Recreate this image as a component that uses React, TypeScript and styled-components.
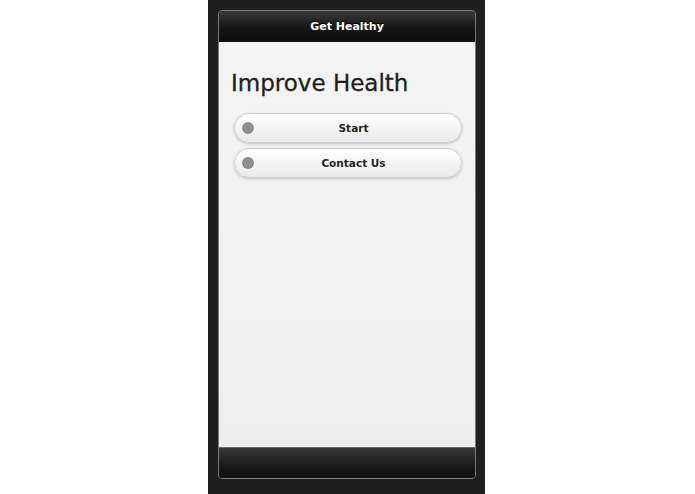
import styled, { createGlobalStyle } from "styled-components";

const GlobalStyle = createGlobalStyle`
  html, body {
    margin: 0;
    padding: 0;
    background: #ffffff;
  }
  body {
    font-family: "DejaVu Sans", "Liberation Sans", sans-serif;
  }
`;

const Page = styled.div`
  display: flex;
  justify-content: center;
  width: 695px;
  height: 494px;
  overflow: hidden;
`;

const PhoneFrame = styled.div`
  box-sizing: border-box;
  width: 277px;
  height: 494px;
  margin-right: 2px;
  padding: 10px 9px 15px 10px;
  background: #1f1f1f;
`;

const Screen = styled.div`
  box-sizing: border-box;
  display: flex;
  flex-direction: column;
  width: 258px;
  height: 469px;
  border: 1px solid #7a7a7a;
  border-radius: 4px;
  overflow: hidden;
`;

const Bar = styled.div<{ $footer?: boolean }>`
  box-sizing: border-box;
  flex-shrink: 0;
  display: flex;
  align-items: center;
  justify-content: center;
  height: 31px;
  background: ${(p) =>
    p.$footer
      ? "linear-gradient(#383838, #1a1a1a 60%, #111111)"
      : "linear-gradient(#3a3a3a, #161616 55%, #0e0e0e)"};
  border-top: ${(p) => (p.$footer ? "1px solid #6a6a6a" : "none")};
  color: #ffffff;
  font-size: 11px;
  font-weight: bold;
  text-shadow: 0 -1px 1px #000000;
`;

const Content = styled.div`
  flex: 1;
  display: flex;
  flex-direction: column;
  padding: 0 13px 0 15px;
  background: linear-gradient(#f4f4f4, #eeeeee);
`;

const Title = styled.h1`
  margin: 27px 0 16px -3px;
  font-size: 23px;
  line-height: 28px;
  font-weight: normal;
  color: #1e1e1e;
  -webkit-text-stroke: 0.3px #1e1e1e;
`;

const ButtonList = styled.div`
  display: flex;
  flex-direction: column;
  gap: 5px;
`;

const ListButton = styled.button`
  box-sizing: border-box;
  display: flex;
  align-items: center;
  height: 30px;
  padding: 0 8px 0 7px;
  border: 1px solid #cdcdcd;
  border-radius: 15px;
  background: linear-gradient(#ffffff, #f4f4f4 50%, #e9e9e9);
  box-shadow: 0 1px 3px rgba(0, 0, 0, 0.22);
  font-family: "DejaVu Sans", "Liberation Sans", sans-serif;
  font-size: 10.5px;
  font-weight: bold;
  color: #222222;
  text-shadow: 0 1px 0 #ffffff;
  cursor: pointer;
`;

const Dot = styled.span`
  flex-shrink: 0;
  width: 12px;
  height: 12px;
  border-radius: 50%;
  background: #8f8f8f;
`;

const Label = styled.span`
  flex: 1;
  text-align: center;
`;

const items = ["Start", "Contact Us"];

export default function App() {
  return (
    <>
      <GlobalStyle />
      <Page>
        <PhoneFrame>
          <Screen>
            <Bar>Get Healthy</Bar>
            <Content>
              <Title>Improve Health</Title>
              <ButtonList>
                {items.map((item) => (
                  <ListButton key={item}>
                    <Dot />
                    <Label>{item}</Label>
                  </ListButton>
                ))}
              </ButtonList>
            </Content>
            <Bar $footer />
          </Screen>
        </PhoneFrame>
      </Page>
    </>
  );
}
